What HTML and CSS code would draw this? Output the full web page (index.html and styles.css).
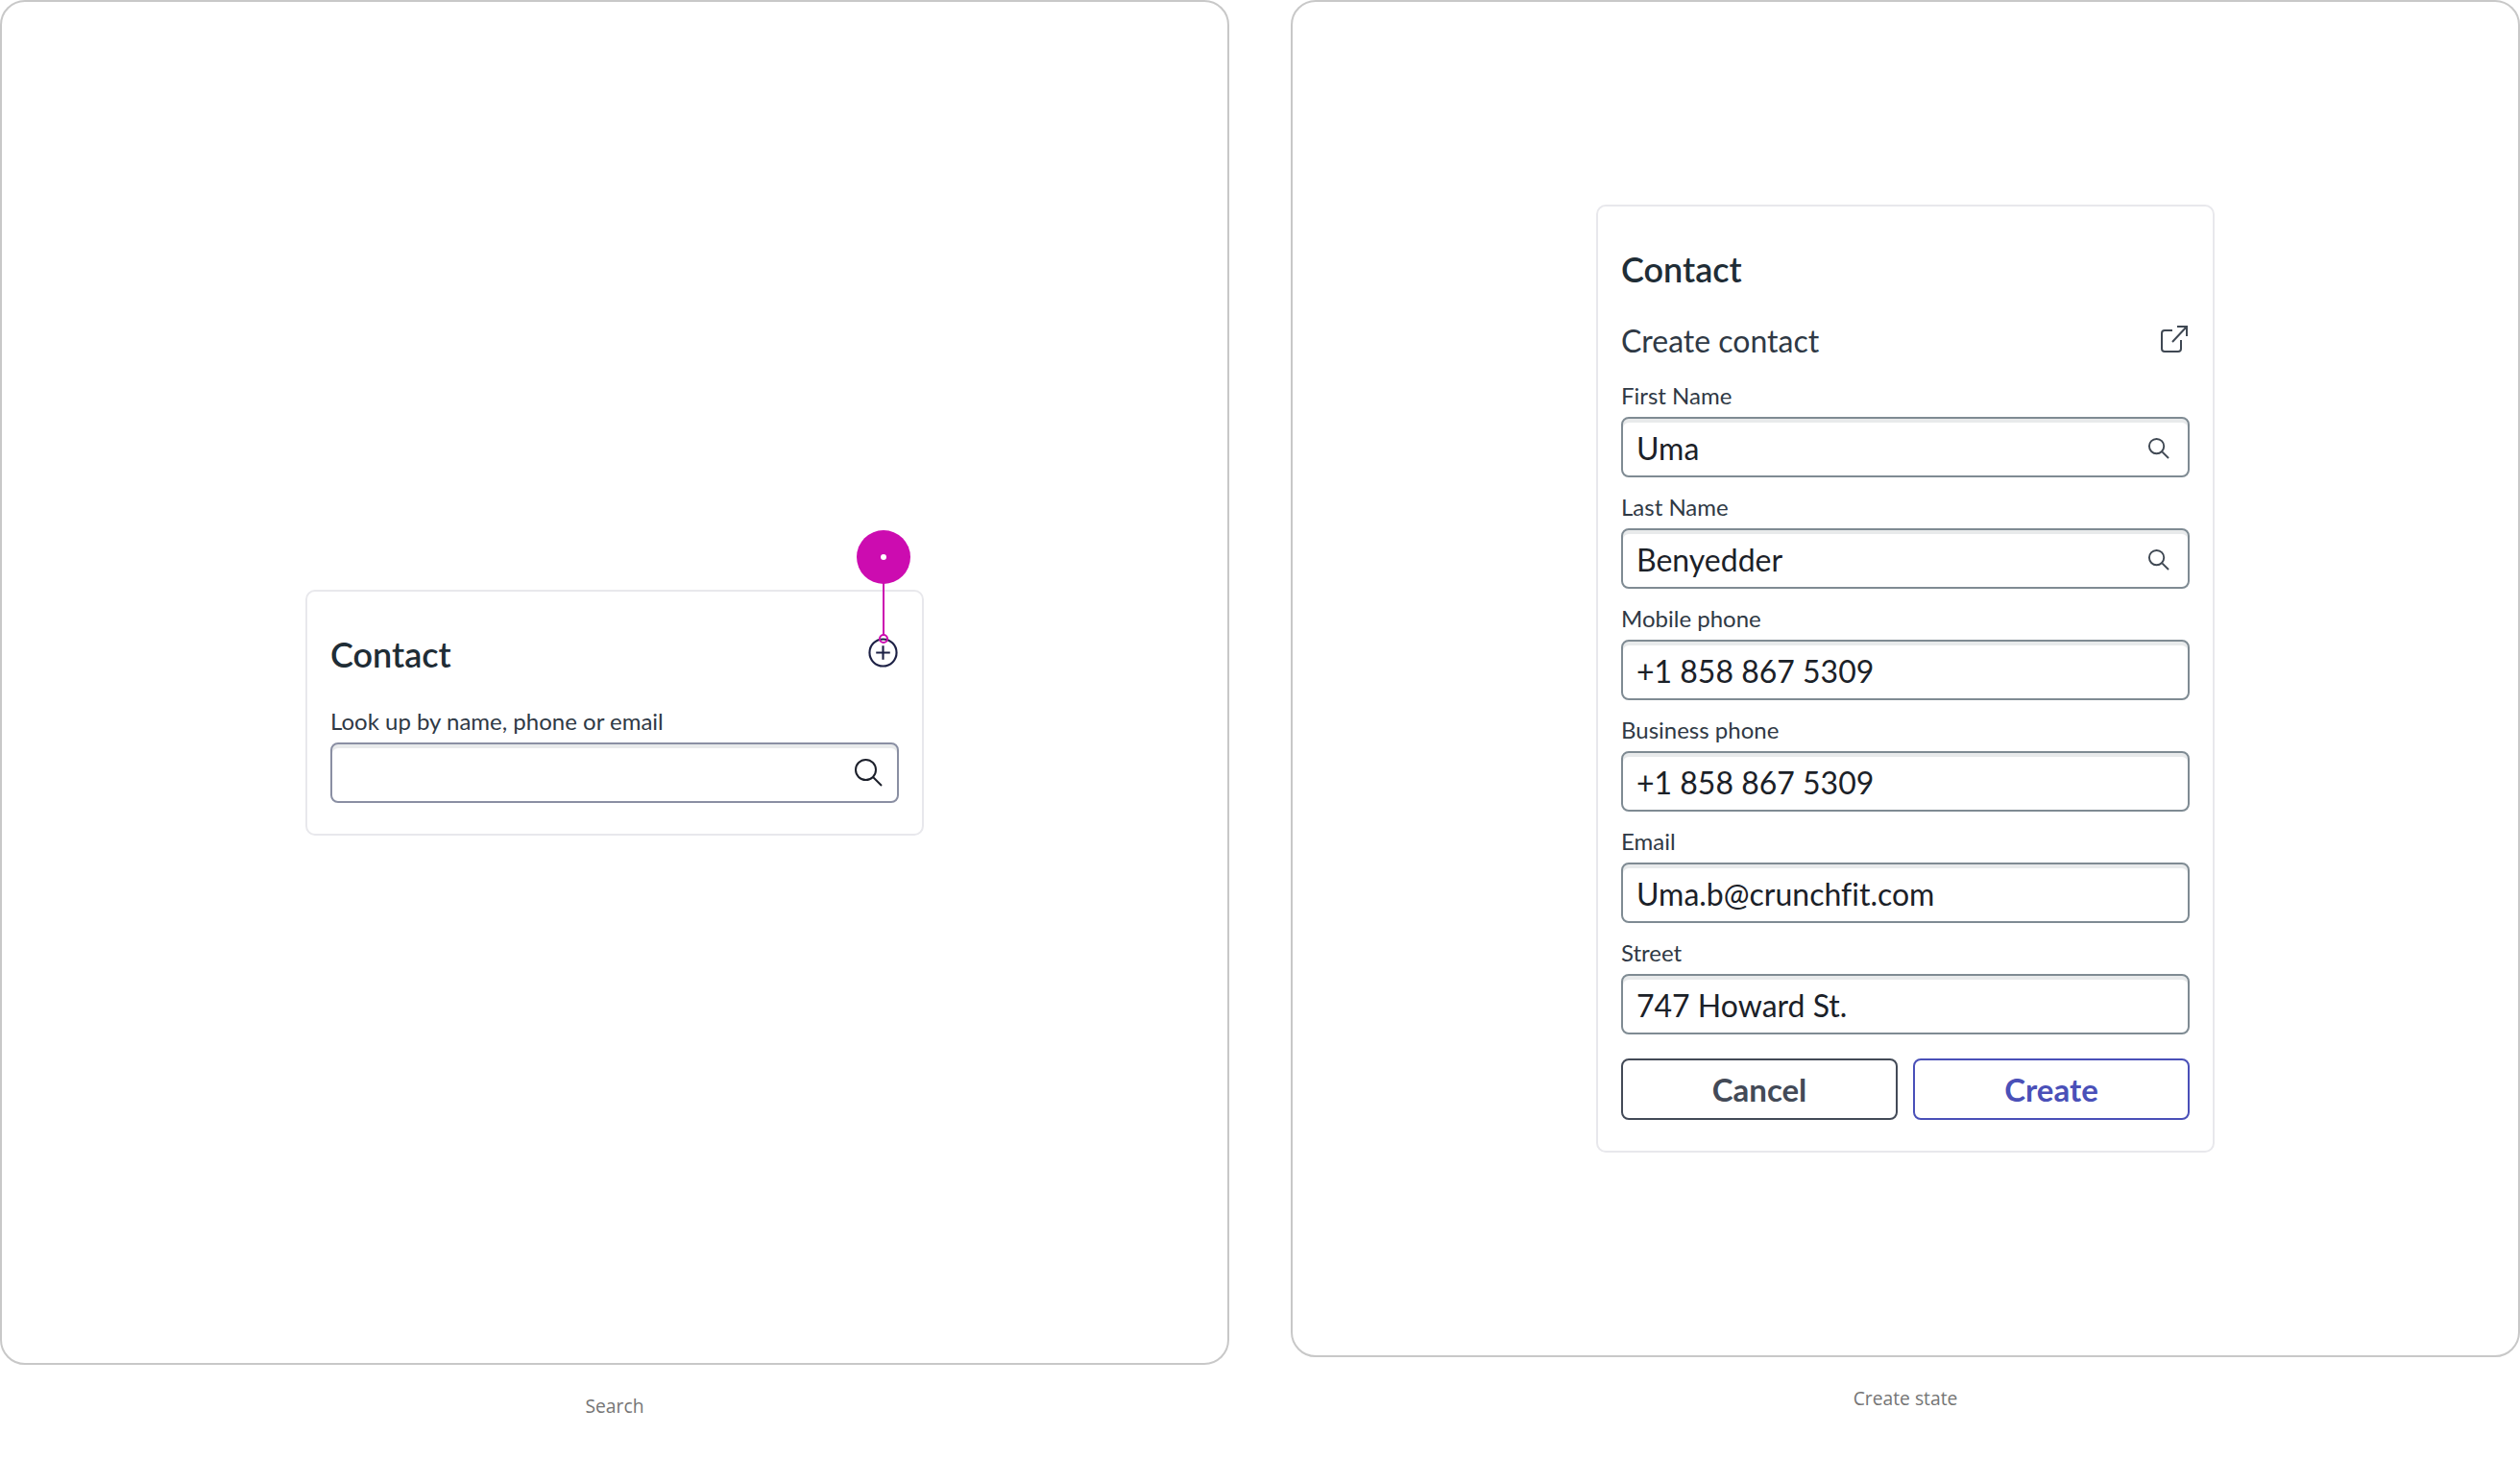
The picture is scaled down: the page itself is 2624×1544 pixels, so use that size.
FILE: index.html
```html
<!DOCTYPE html>
<html lang="en">
<head>
    <meta charset="UTF-8">
    <title>Contact</title>
    <link rel="stylesheet" href="styles.css">
</head>
<body>
    <div class="board">
        <section class="state state-search">
            <div class="frame">
                <div class="card">
                    <div class="card-header">
                        <h2 class="card-title">Contact</h2>
                        <svg class="add-icon" viewBox="0 0 32 32" fill="none" stroke="#1d2145" stroke-width="2.2">
                            <circle cx="16" cy="16" r="14.5"/>
                            <path d="M16 8.5v15M8.5 16h15"/>
                        </svg>
                        <div class="pin">
                            <span class="pin-head"><span class="pin-dot"></span></span>
                            <span class="pin-line"></span>
                            <span class="pin-end"></span>
                        </div>
                    </div>
                    <label class="form-label">Look up by name, phone or email</label>
                    <div class="form-input form-input-empty">
                        <svg class="search-icon search-icon-lg" viewBox="0 0 30 30" fill="none" stroke="#1b1f2a" stroke-width="2">
                            <circle cx="12.5" cy="12.5" r="10.5"/>
                            <path d="M20 20l9 9"/>
                        </svg>
                    </div>
                </div>
            </div>
            <p class="caption">Search</p>
        </section>

        <section class="state state-create">
            <div class="frame">
                <div class="card">
                    <h2 class="card-title">Contact</h2>
                    <div class="sub-header">
                        <h3 class="sub-title">Create contact</h3>
                        <svg class="external-icon" viewBox="0 0 28 28" fill="none" stroke="#3f4853" stroke-width="2">
                            <path d="M12 5H4a3 3 0 0 0-3 3v16a3 3 0 0 0 3 3h14a3 3 0 0 0 3-3v-9"/>
                            <path d="M12 17L27 1M17 1h10v10"/>
                        </svg>
                    </div>
                    <div class="form-group">
                        <label class="form-label">First Name</label>
                        <div class="form-input">
                            <span class="input-value">Uma</span>
                            <svg class="search-icon" viewBox="0 0 24 24" fill="none" stroke="#3f4853" stroke-width="2">
                                <circle cx="10" cy="10" r="8"/>
                                <path d="M16 16l7 7"/>
                            </svg>
                        </div>
                    </div>
                    <div class="form-group">
                        <label class="form-label">Last Name</label>
                        <div class="form-input">
                            <span class="input-value">Benyedder</span>
                            <svg class="search-icon" viewBox="0 0 24 24" fill="none" stroke="#3f4853" stroke-width="2">
                                <circle cx="10" cy="10" r="8"/>
                                <path d="M16 16l7 7"/>
                            </svg>
                        </div>
                    </div>
                    <div class="form-group">
                        <label class="form-label">Mobile phone</label>
                        <div class="form-input"><span class="input-value">+1 858 867 5309</span></div>
                    </div>
                    <div class="form-group">
                        <label class="form-label">Business phone</label>
                        <div class="form-input"><span class="input-value">+1 858 867 5309</span></div>
                    </div>
                    <div class="form-group">
                        <label class="form-label">Email</label>
                        <div class="form-input"><span class="input-value">Uma.b@crunchfit.com</span></div>
                    </div>
                    <div class="form-group">
                        <label class="form-label">Street</label>
                        <div class="form-input"><span class="input-value">747 Howard St.</span></div>
                    </div>
                    <div class="form-actions">
                        <button class="btn btn-secondary">Cancel</button>
                        <button class="btn btn-primary">Create</button>
                    </div>
                </div>
            </div>
            <p class="caption">Create state</p>
        </section>
    </div>
</body>
</html>
```

FILE: styles.css
```css
* {
    margin: 0;
    padding: 0;
    box-sizing: border-box;
}

body {
    font-family: Lato, 'Liberation Sans', sans-serif;
    background-color: #fff;
}

.board {
    display: flex;
    justify-content: space-between;
    width: 2624px;
}

.state {
    width: 1280px;
}

.frame {
    border: 2px solid #c8c8c8;
    border-radius: 26px;
}

.state-search .frame {
    height: 1421px;
    padding-top: 612px;
}

.state-create .frame {
    height: 1413px;
    padding-top: 211px;
}

.caption {
    margin-top: 30px;
    text-align: center;
    font-family: 'Open Sans', sans-serif;
    font-size: 19.3px;
    line-height: 26px;
    color: #757575;
}

.card {
    width: 644px;
    margin: 0 auto;
    padding: 0 24px;
    background: #fff;
    border: 2px solid #e8e8ec;
    border-radius: 10px;
}

.state-search .card {
    height: 256px;
    padding-top: 43px;
}

.state-create .card {
    height: 987px;
    padding-top: 43px;
}

.card-header {
    position: relative;
    display: flex;
    justify-content: space-between;
    align-items: center;
    margin-bottom: 33px;
}

.card-title {
    font-size: 36px;
    font-weight: 600;
    line-height: 44px;
    color: #1f2d36;
}

.add-icon {
    width: 31px;
    height: 31px;
    margin-right: 1px;
    margin-bottom: 4px;
}

.pin {
    position: absolute;
    right: -12px;
    top: -107px;
    width: 56px;
    height: 120px;
}

.pin-head {
    position: absolute;
    left: 0;
    top: 0;
    width: 56px;
    height: 56px;
    border-radius: 50%;
    background: #cc0cb0;
}

.pin-dot {
    position: absolute;
    left: 25px;
    top: 25px;
    width: 6px;
    height: 6px;
    border-radius: 50%;
    background: #fff;
}

.pin-line {
    position: absolute;
    left: 27px;
    top: 54px;
    width: 2px;
    height: 55px;
    background: #cc0cb0;
}

.pin-end {
    position: absolute;
    left: 23px;
    top: 108px;
    width: 10px;
    height: 10px;
    border: 2px solid #cc0cb0;
    border-radius: 50%;
}

.form-label {
    display: block;
    font-size: 24px;
    line-height: 30px;
    color: #2f3945;
    margin-bottom: 7px;
}

.form-input {
    display: flex;
    justify-content: space-between;
    align-items: center;
    height: 63px;
    padding: 2px 19px 0 14px;
    background: #fff;
    border: 2px solid #7f8b93;
    border-radius: 8px;
    box-shadow: inset 0 4px 0 #e8eaeb;
}

.form-input-empty {
    border-color: #8a8fa3;
    padding-right: 15px;
}

.input-value {
    font-size: 32px;
    color: #1b2128;
    font-variant-ligatures: none;
}

.search-icon {
    width: 23px;
    height: 23px;
}

.search-icon-lg {
    width: 30px;
    height: 30px;
    margin-left: auto;
    margin-bottom: 4px;
}

.sub-header {
    display: flex;
    justify-content: space-between;
    align-items: center;
    margin-top: 33px;
    margin-bottom: 22px;
}

.sub-title {
    font-size: 32px;
    font-weight: 400;
    line-height: 40px;
    color: #2f3945;
}

.external-icon {
    width: 28px;
    height: 28px;
    margin-right: 2px;
    margin-bottom: 4px;
}

.form-group {
    margin-bottom: 16px;
}

.form-actions {
    display: grid;
    grid-template-columns: 1fr 1fr;
    gap: 16px;
    margin-top: 25px;
}

.btn {
    height: 64px;
    background: #fff;
    border: 2px solid;
    border-radius: 8px;
    font-family: inherit;
    font-size: 33px;
    font-weight: 700;
}

.btn-secondary {
    color: #434a57;
    border-color: #434a57;
}

.btn-primary {
    color: #4a50b8;
    border-color: #4a50b8;
}
```
